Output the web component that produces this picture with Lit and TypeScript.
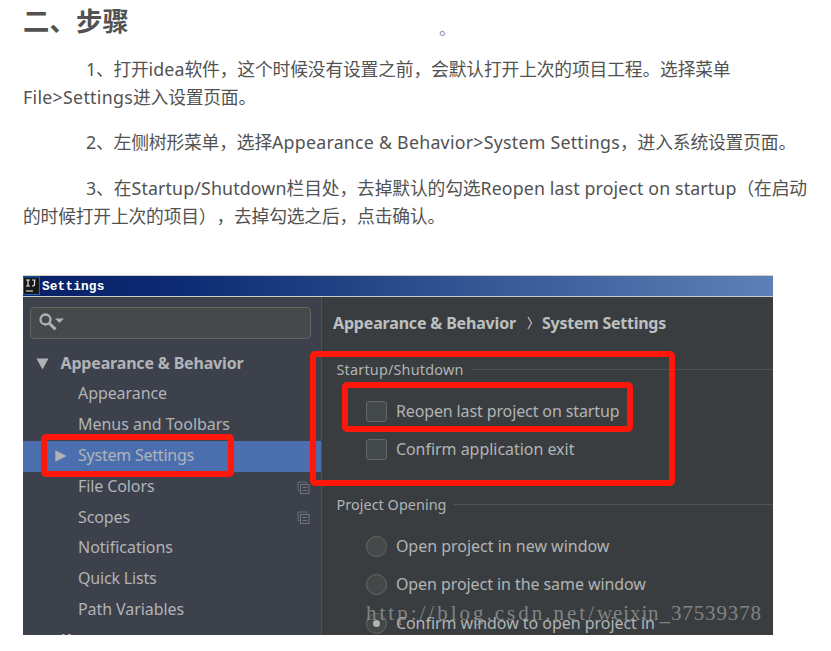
import { LitElement, html, css, svg } from "lit";
import { customElement, property } from "lit/decorators.js";

/** Text run whose tracking is computed so that it fills a given width. */
@customElement("fit-text")
class FitText extends LitElement {
  @property({ type: Number }) w = 0;
  @property() text = "";
  static styles = css`
    :host { display: inline-block; white-space: pre; }
    span { display: inline-block; }
  `;
  render() {
    return html`<span>${this.text}</span>`;
  }
  updated() {
    const el = this.renderRoot.querySelector("span")!;
    el.style.letterSpacing = "0px";
    const natural = el.getBoundingClientRect().width;
    const gap = (this.w - natural) / this.text.length;
    el.style.letterSpacing = `${gap}px`;
  }
}

const t = (text: string, w: number) => html`<fit-text .text=${text} .w=${w}></fit-text>`;

const copyIcon = svg`<svg class="copy-icon" width="13" height="13" viewBox="0 0 13 13" fill="none">
  <path d="M2.5 9.5H1V1H9.5V2.5" stroke="#5f717b"/>
  <rect x="3.5" y="3.5" width="8.5" height="9" stroke="#727679"/>
  <path d="M5.5 6.5H10M5.5 9.5H10" stroke="#727679"/>
</svg>`;

interface Item { label: string; w: number; kind?: "selected" | "shared"; }

const items: Item[] = [
  { label: "Appearance", w: 89 },
  { label: "Menus and Toolbars", w: 152 },
  { label: "System Settings", w: 116, kind: "selected" },
  { label: "File Colors", w: 76.5, kind: "shared" },
  { label: "Scopes", w: 52, kind: "shared" },
  { label: "Notifications", w: 95 },
  { label: "Quick Lists", w: 78.5 },
  { label: "Path Variables", w: 106 },
];

@customElement("settings-window")
class SettingsWindow extends LitElement {
  static styles = css`
    :host {
      display: block; position: relative; box-sizing: border-box;
      width: 750px; height: 360px; overflow: hidden;
      font-family: "Noto Sans", "Open Sans", sans-serif; font-size: 16px; color: #b1b4b6;
    }
    .title {
      box-sizing: border-box; height: 22px; display: flex; align-items: center; gap: 2px;
      border-top: 1px solid #d5d2ca; border-bottom: 1px solid #cfccc5;
      background: linear-gradient(90deg, #0a2068 0%, #0c2a72 20%, #5e80b6 100%);
      color: #fff; font: bold 12.8px/20px "Liberation Mono", monospace;
    }
    .title fit-text { padding-top: 2px; }
    .logo { display: block; flex: none; }
    .body { display: flex; height: 338px; }
    .side {
      box-sizing: border-box; width: 299px; flex: none; background: #3d414c;
      border-right: 1px solid #505050; padding-top: 10px; overflow: hidden;
    }
    .search {
      box-sizing: border-box; width: 281px; height: 32px; margin-left: 7px;
      border: 1px solid #62665f; border-radius: 4px; background: #454949;
      padding: 5px 0 0 8px;
    }
    .search svg { display: block; }
    .tree { padding-top: 9.6px; }
    .row { height: 30.8px; line-height: 30.8px; display: flex; align-items: center; }
    .row fit-text { margin-top: -2px; }
    .row.selected { background: #4b6eaf; }
    .row.selected fit-text { margin-top: -1px; }
    .mark { width: 55px; flex: none; display: flex; box-sizing: border-box; padding-left: 32px; }
    .row.top { font-weight: bold; }
    .row.top .mark { width: 37.5px; padding-left: 13px; }
    .copy-icon { margin: 0 11px 0 auto; }
    .main { flex: 1; background: #3a3d3f; padding-left: 11px; min-width: 0; overflow: hidden; }
    .crumbs { display: flex; font-weight: bold; color: #bdc0c1; height: 22px; line-height: 22px; padding-top: 15px; align-items: center; }
    .chev { width: 26px; display: flex; justify-content: center; padding-left: 1px; box-sizing: border-box; }
    .group { display: flex; align-items: center; gap: 7px; padding-left: 3.5px; height: 20px; line-height: 20px; font-size: 14.4px; }
    .group::after { content: ""; flex: 1; height: 1px; margin-top: -2px; background: #505253; }
    .first { margin-top: 26px; }
    .second { margin-top: 35px; }
    .opts { display: flex; flex-direction: column; gap: 17.6px; padding-left: 33.4px; }
    .checks { padding-top: 20.6px; }
    .radios { padding-top: 20.4px; }
    .opt { display: flex; align-items: center; gap: 8.5px; height: 21px; line-height: 21px; }
    .box { box-sizing: border-box; width: 21px; height: 21px; border: 1.5px solid #656866; border-radius: 3px; background: #434849; }
    .dot { border-radius: 50%; display: flex; align-items: center; justify-content: center; }
    .dot.on::after { content: ""; width: 7px; height: 7px; border-radius: 50%; background: #b4b4b4; }
    .water {
      position: absolute; left: 343px; top: 327px; line-height: 22px;
      font-family: "Liberation Serif", serif; font-size: 21px; color: #929594; opacity: .8;
    }
    .frame { position: absolute; box-sizing: border-box; border: 6.5px solid #ff170b; border-radius: 5px; }
    .f1 { left: 287px; top: 76px; width: 365px; height: 135px; }
    .f2 { left: 319px; top: 107px; width: 291px; height: 50px; }
    .f3 { left: 18px; top: 159px; width: 193px; height: 43px; }
  `;
  render() {
    return html`
      <div class="title">
        <svg class="logo" width="17" height="20" viewBox="0 0 17 20">
          <rect x="0.5" y="1" width="16" height="17.5" fill="#151719" stroke="#1769c4"/>
          <path d="M3 4H7M5 4V10M3 10H7M9 4H12.5M11.5 4V8.5Q11.5 10 9 10" fill="none" stroke="#e6e6e6" stroke-width="1.2"/>
          <path d="M3 15H10" stroke="#bbb" stroke-width="1.4"/>
        </svg>
        ${t("Settings", 62.5)}
      </div>
      <div class="body">
        <div class="side">
          <div class="search">
            <svg width="27" height="20" viewBox="0 0 27 20">
              <circle cx="6.5" cy="6.5" r="5" fill="none" stroke="#b0b2b3" stroke-width="2.3"/>
              <path d="M10 10L16.5 16.3" stroke="#b0b2b3" stroke-width="3"/>
              <path d="M16 5.5H25L20.5 10Z" fill="#b0b2b3"/>
            </svg>
          </div>
          <div class="tree">
            <div class="row top">
              <span class="mark"><svg width="13" height="12" viewBox="0 0 13 12"><path d="M0.5 0.5H12.5L6.5 11.5Z" fill="#b0b2b3"/></svg></span>
              ${t("Appearance & Behavior", 183)}
            </div>
            ${items.map((i) => html`
              <div class="row ${i.kind ?? ""}">
                <span class="mark">${i.kind === "selected"
                  ? html`<svg width="12" height="12" viewBox="0 0 12 12"><path d="M0.3 0.3L11.7 6L0.3 11.7Z" fill="#b0b2b3"/></svg>`
                  : ""}</span>
                ${t(i.label, i.w)}
                ${i.kind === "shared" ? copyIcon : ""}
              </div>`)}
            <div class="row top"><span class="mark"></span>${t("Keymap", 64)}</div>
          </div>
        </div>
        <div class="main">
          <div class="crumbs">
            ${t("Appearance & Behavior", 183)}
            <span class="chev"><svg width="6" height="14" viewBox="0 0 6 14"><path d="M1 1L4.5 7L1 13" fill="none" stroke="#b5b8ba" stroke-width="1.3"/></svg></span>
            ${t("System Settings", 124)}
          </div>
          <div class="group first">${t("Startup/Shutdown", 127)}</div>
          <div class="opts checks">
            <div class="opt"><span class="box"></span>${t("Reopen last project on startup", 223.5)}</div>
            <div class="opt"><span class="box"></span>${t("Confirm application exit", 178.5)}</div>
          </div>
          <div class="group second">${t("Project Opening", 110)}</div>
          <div class="opts radios">
            <div class="opt"><span class="box dot"></span>${t("Open project in new window", 213.5)}</div>
            <div class="opt"><span class="box dot"></span>${t("Open project in the same window", 250)}</div>
            <div class="opt"><span class="box dot on"></span>${t("Confirm window to open project in", 259)}</div>
          </div>
        </div>
      </div>
      <div class="water">${t("http://blog.csdn.net/", 231)}${t("weixin_37539378", 165)}</div>
      <div class="frame f1"></div>
      <div class="frame f2"></div>
      <div class="frame f3"></div>
    `;
  }
}

@customElement("app-root")
class AppRoot extends LitElement {
  static styles = css`
    :host {
      display: block; box-sizing: border-box; position: relative; width: 831px; height: 651px; overflow: hidden;
      background: #fff; padding-left: 23px; color: #525252;
      font-family: "Noto Sans", "Noto Sans CJK SC", sans-serif; font-size: 17.8px;
      text-spacing-trim: space-all;
    }
    h2 { margin: 0; padding-bottom: 3px; font: bold 26.4px/40px "Noto Sans CJK SC", sans-serif; }
    .stray { position: absolute; left: 439px; top: 18px; font: 17px/20px "Noto Sans CJK SC", sans-serif; color: #8d90a8; }
    .steps { padding-top: 12px; display: flex; flex-direction: column; gap: 17.3px; height: 232px; box-sizing: border-box; }
    p { margin: 0; }
    .line { height: 28px; line-height: 28px; white-space: nowrap; display: flex; }
    .indent { padding-left: 63px; }
  `;
  render() {
    return html`
      <h2>${t("二、步骤", 106)}</h2>
      <span class="stray">。</span>
      <div class="steps">
        <p>
          <span class="line indent">${t("1", 10)}${t("、打开", 52.5)}${t("idea", 36)}${t("软件，这个时候没有设置之前，会默认打开上次的项目工程。选择菜单", 546)}</span>
          <span class="line">${t("File>Settings", 110)}${t("进入设置页面。", 123)}</span>
        </p>
        <p>
          <span class="line indent">${t("2", 10)}${t("、左侧树形菜单，选择", 176)}${t("Appearance & Behavior>System Settings", 348)}${t("，进入系统设置页面。", 176)}</span>
        </p>
        <p>
          <span class="line indent">${t("3", 10)}${t("、在", 35.5)}${t("Startup/Shutdown", 155)}${t("栏目处，去掉默认的勾选", 194)}${t("Reopen last project on startup", 256)}${t("（在启动", 70.4)}</span>
          <span class="line">${t("的时候打开上次的项目），去掉勾选之后，点击确认。", 422)}</span>
        </p>
      </div>
      <settings-window></settings-window>
    `;
  }
}
